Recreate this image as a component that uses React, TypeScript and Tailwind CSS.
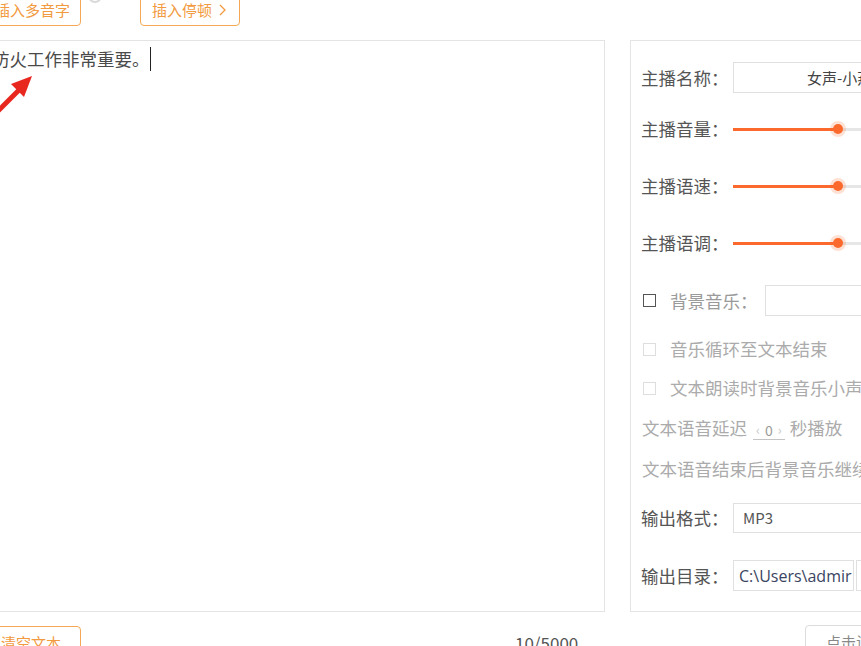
import React from "react";

function Slider() {
  return (
    <div className="relative flex h-[30px] flex-1 items-center">
      <div className="h-[3px] w-[105px] bg-[#fb6a2c]" />
      <div className="h-[3px] flex-1 bg-[#e6e6e6]" />
      <div className="absolute left-[100px] top-[10px] h-[10px] w-[10px] rounded-full bg-[#fb6a2c] shadow-[0_0_0_3px_rgba(251,106,44,0.2)]" />
    </div>
  );
}

function Label({ children }: { children: React.ReactNode }) {
  return <div className="w-[92px] shrink-0 text-[17.5px] leading-[24px] text-[#555]">{children}</div>;
}

export default function App() {
  return (
    <div className="relative h-[646px] w-[861px] overflow-hidden bg-white font-['Noto_Sans_CJK_SC',sans-serif]">
      {/* top toolbar */}
      <div className="flex h-[26px] items-start">
        <div className="ml-[-10px] mt-[-7px] flex h-[33px] w-[91px] items-center rounded-[4px] border border-[#f6a854] pl-[4px] text-[15px] leading-[20px] text-[#f29a40]">
          插入多音字
        </div>
        <div className="ml-[7px] mt-[-11px] h-[14px] w-[14px] rounded-full border-2 border-[#d9d9d9]" />
        <div className="ml-[38px] mt-[-7px] flex h-[33px] w-[100px] items-center rounded-[4px] border border-[#f6a854] pl-[11px] text-[15px] leading-[20px] text-[#f29a40]">
          插入停顿
          <svg className="ml-[7px]" width="7" height="12" viewBox="0 0 7 12">
            <path d="M1 1 L6 6 L1 11" fill="none" stroke="#f29a40" strokeWidth="1.3" />
          </svg>
        </div>
      </div>

      {/* main panels */}
      <div className="mt-[14px] flex">
        <div className="ml-[-10px] h-[572px] w-[615px] shrink-0 border border-[#e4e4e4] pl-[1px] pt-[6px]">
          <div className="flex items-start text-[17.5px] leading-[24px] text-[#4a4a4a]">
            <span>防火工作非常重要。</span>
            <span className="inline-block h-[24px] w-[1.5px] bg-[#222]" />
          </div>
        </div>

        <div className="ml-[25px] h-[572px] w-[260px] shrink-0 border border-[#e4e4e4] pl-[10px] pt-[21px]">
          {/* name */}
          <div className="flex h-[31px] items-center">
            <Label>主播名称：</Label>
            <div className="flex h-[31px] flex-1 items-center whitespace-nowrap border border-[#e0e0e0] pl-[73px] text-[15px] leading-[20px] text-[#444]">
              女声-小燕
            </div>
          </div>
          <div className="mt-[21px] flex h-[30px] items-center">
            <Label>主播音量：</Label>
            <Slider />
          </div>
          <div className="mt-[27px] flex h-[30px] items-center">
            <Label>主播语速：</Label>
            <Slider />
          </div>
          <div className="mt-[27px] flex h-[30px] items-center">
            <Label>主播语调：</Label>
            <Slider />
          </div>
          {/* bgm */}
          <div className="mt-[27px] flex h-[31px] items-center">
            <div className="ml-[2px] h-[13px] w-[13px] shrink-0 border-[1.5px] border-[#555]" />
            <div className="ml-[14px] w-[95px] shrink-0 text-[17.5px] leading-[24px] text-[#9a9a9a]">背景音乐：</div>
            <div className="h-[31px] flex-1 border border-[#e0e0e0]" />
          </div>
          <div className="mt-[18px] flex h-[30px] items-center whitespace-nowrap">
            <div className="ml-[2px] h-[13px] w-[13px] shrink-0 border border-[#dedede]" />
            <div className="ml-[14px] text-[17.5px] leading-[24px] text-[#ababab]">音乐循环至文本结束</div>
          </div>
          <div className="mt-[9px] flex h-[30px] items-center whitespace-nowrap">
            <div className="ml-[2px] h-[13px] w-[13px] shrink-0 border border-[#dedede]" />
            <div className="ml-[14px] text-[17.5px] leading-[24px] text-[#ababab]">文本朗读时背景音乐小声</div>
          </div>
          <div className="mt-[10px] flex h-[30px] items-center whitespace-nowrap text-[17.5px] leading-[24px] text-[#ababab]">
            <span className="ml-[1px]">文本语音延迟</span>
            <span className="ml-[6px] mt-[4px] flex h-[20px] items-center gap-[5px] border-b border-[#c4c4c4] px-[3px] text-[14px] leading-[18px] text-[#9a9a9a]">
              <span className="text-[13px] text-[#c8c8c8]">‹</span>
              <span>0</span>
              <span className="text-[13px] text-[#c8c8c8]">›</span>
            </span>
            <span className="ml-[5px]">秒播放</span>
          </div>
          <div className="mt-[11px] flex h-[30px] items-center whitespace-nowrap text-[17.5px] leading-[24px] text-[#ababab]">
            <span className="ml-[1px]">文本语音结束后背景音乐继续播放</span>
          </div>
          {/* format */}
          <div className="mt-[19px] flex h-[30px] items-center">
            <Label>输出格式：</Label>
            <div className="flex h-[30px] flex-1 items-center border border-[#e0e0e0] pl-[9px] text-[15px] leading-[20px] text-[#555]">
              MP3
            </div>
          </div>
          <div className="mt-[27px] flex h-[31px] items-center">
            <Label>输出目录：</Label>
            <div className="flex h-[31px] w-[121px] shrink-0 items-center overflow-hidden whitespace-nowrap border border-[#e0e0e0] pl-[5px] font-['Open_Sans',sans-serif] text-[16px] leading-[20px] text-[#3a4562]">
              C:\Users\admir
            </div>
            <div className="ml-[2px] h-[31px] flex-1 border border-[#e0e0e0]" />
          </div>
        </div>
      </div>

      {/* bottom row */}
      <div className="mt-[14px] flex items-start">
        <div className="ml-[-10px] flex h-[34px] w-[91px] shrink-0 items-center rounded-[4px] border border-[#f6a854] pl-[10px] text-[15px] leading-[20px] text-[#f29a40]">
          清空文本
        </div>
        <div className="ml-[434px] mt-[5px] w-[70px] shrink-0 text-[17px] leading-[24px] text-[#555]">10/5000</div>
        <div className="ml-[220px] mt-[-1px] flex h-[34px] w-[100px] shrink-0 items-center rounded-[4px] border border-[#dcdcdc] pl-[20px] text-[15px] leading-[20px] text-[#888]">
          点击试听
        </div>
      </div>

      {/* red annotation arrow */}
      <svg className="absolute left-0 top-[60px]" width="50" height="60" viewBox="0 60 50 60">
        <line x1="-6" y1="115" x2="20" y2="89" stroke="#e8271f" strokeWidth="5" />
        <polygon points="32,76 11,84 24,97" fill="#e8271f" />
      </svg>
    </div>
  );
}
